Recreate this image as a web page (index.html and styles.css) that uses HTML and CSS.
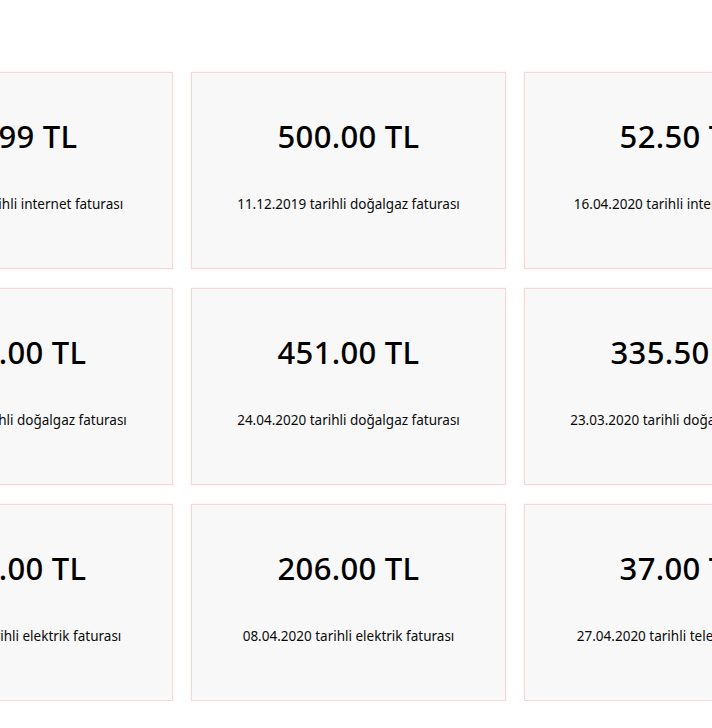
FILE: index.html
```html
<!DOCTYPE html>
<html lang="tr">
<head>
<meta charset="utf-8">
<link rel="stylesheet" href="styles.css">
</head>
<body>
<main class="grid">
  <div class="card"><div class="amount">49.99 TL</div><div class="desc">10.04.2020 tarihli internet faturası</div></div>
  <div class="card"><div class="amount">500.00 TL</div><div class="desc">11.12.2019 tarihli doğalgaz faturası</div></div>
  <div class="card"><div class="amount">52.50 TL</div><div class="desc">16.04.2020 tarihli internet faturası</div></div>
  <div class="card"><div class="amount">120.00 TL</div><div class="desc">12.03.2020 tarihli doğalgaz faturası</div></div>
  <div class="card"><div class="amount">451.00 TL</div><div class="desc">24.04.2020 tarihli doğalgaz faturası</div></div>
  <div class="card"><div class="amount">335.50 TL</div><div class="desc">23.03.2020 tarihli doğalgaz faturası</div></div>
  <div class="card"><div class="amount">150.00 TL</div><div class="desc">15.03.2020 tarihli elektrik faturası</div></div>
  <div class="card"><div class="amount">206.00 TL</div><div class="desc">08.04.2020 tarihli elektrik faturası</div></div>
  <div class="card"><div class="amount">37.00 TL</div><div class="desc">27.04.2020 tarihli telefon faturası</div></div>
</main>
</body>
</html>
```

FILE: styles.css
```css
html, body {
  margin: 0;
  padding: 0;
  background: #ffffff;
  overflow: hidden;
}
body {
  font-family: "Noto Sans", "Open Sans", sans-serif;
  color: #0a0a0a;
}
.grid {
  display: grid;
  grid-template-columns: repeat(3, 315px);
  column-gap: 18px;
  row-gap: 19px;
  padding-top: 72px;
  margin-left: -142px;
  width: max-content;
}
.card {
  box-sizing: border-box;
  height: 197px;
  background: #f8f8f8;
  border: 1px solid #f6d6d6;
  box-shadow: 0 0 2px rgba(240, 190, 190, 0.35);
  display: flex;
  flex-direction: column;
  align-items: center;
  padding-top: 45px;
  gap: 40px;
  text-align: center;
}
.amount {
  font-size: 31px;
  line-height: 36px;
  font-weight: 500;
  letter-spacing: 0.3px;
  color: #000000;
  white-space: nowrap;
}
.desc {
  font-size: 13.5px;
  line-height: 20px;
  white-space: nowrap;
}
```
